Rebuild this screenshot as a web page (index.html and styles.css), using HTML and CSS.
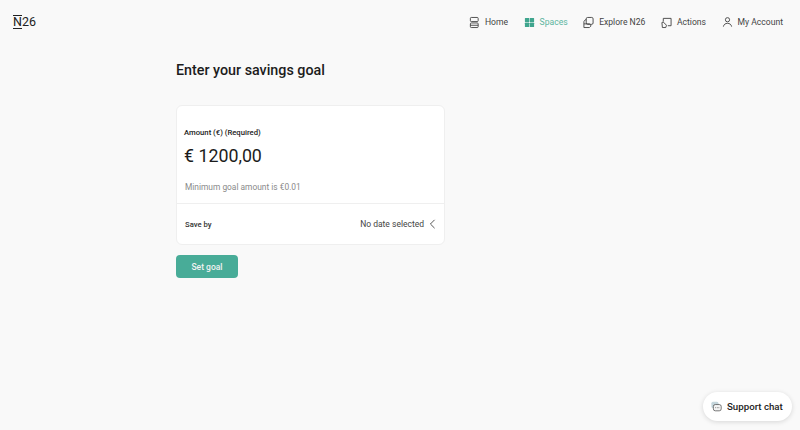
FILE: index.html
```html
<!DOCTYPE html>
<html lang="en">
<head>
<meta charset="utf-8">
<title>Enter your savings goal</title>
<link rel="stylesheet" href="styles.css">
</head>
<body>
<header class="topbar">
  <a class="logo"><span class="logo-n">N</span>26</a>
  <nav class="nav">
    <a class="nav-item">
      <svg class="icon" viewBox="0 0 12 14" fill="none" stroke="#444" stroke-width="1"><rect x="1.500" y="1.500" width="8.500" height="4.500" rx="1"/><rect x="1.500" y="7.500" width="8.500" height="5" rx="1"/><path d="M1.500 10h8.500"/></svg>
      Home
    </a>
    <a class="nav-item nav-active">
      <svg class="icon" viewBox="0 0 12 14" fill="#3fa58e"><rect x="1" y="2" width="4.700" height="4.700" rx=".4"/><rect x="6.300" y="2" width="4.700" height="4.700" rx=".4"/><rect x="1" y="7.300" width="4.700" height="4.700" rx=".4"/><rect x="6.300" y="7.300" width="4.700" height="4.700" rx=".4"/></svg>
      Spaces
    </a>
    <a class="nav-item">
      <svg class="icon" viewBox="0 0 12 14" fill="none" stroke="#444" stroke-width="1"><rect x="3.500" y="1.500" width="7.500" height="7.500" rx="1.500"/><path d="M3.500 4H2.500L1 6v6.500h6L8.500 11V9"/><path d="M1 8.500h6.500"/></svg>
      Explore N26
    </a>
    <a class="nav-item">
      <svg class="icon" viewBox="0 0 12 14" fill="none" stroke="#444" stroke-width="1"><path d="M2.500 6V2.500h8.500v8H7.500"/><path d="M1 7l1.500-.5L6 10l-.8 2.500H1.500z"/></svg>
      Actions
    </a>
    <a class="nav-item">
      <svg class="icon" viewBox="0 0 12 14" fill="none" stroke="#444" stroke-width="1"><circle cx="6" cy="4" r="2.300"/><path d="M1.500 11.500c.4-2.400 2.200-3.600 4.500-3.600s4.100 1.200 4.500 3.600"/></svg>
      My Account
    </a>
  </nav>
</header>

<main class="content">
  <h1 class="title">Enter your savings goal</h1>
  <section class="card">
    <div class="card-top">
      <div class="field-label">Amount (€) (Required)</div>
      <div class="amount">€ 1200,00</div>
      <div class="hint">Minimum goal amount is €0.01</div>
    </div>
    <div class="card-row">
      <span class="row-label">Save by</span>
      <span class="row-value">No date selected
        <svg class="chevron" viewBox="0 0 8 12" fill="none" stroke="#333" stroke-width="1"><path d="M6.500 1L1.500 6l5 5"/></svg>
      </span>
    </div>
  </section>
  <button class="primary" type="button">Set goal</button>
</main>

<button class="support" type="button">
  <svg class="support-icon" viewBox="0 0 14 14"><rect x="0.500" y="1" width="9" height="8" rx="2" fill="#c5d6dc"/><rect x="3" y="4.500" width="10" height="8" rx="2.500" fill="#f4f4f4" stroke="#555" stroke-width="1"/><path d="M5.500 8.500h5" stroke="#555" stroke-width="1" stroke-dasharray="1 1"/></svg>
  Support chat
</button>
</body>
</html>
```

FILE: styles.css
```css
* { box-sizing: border-box; }

html, body { height: 100%; }

body {
  margin: 0;
  background: #f9f9f9;
  color: #1f1f1f;
  font-family: Roboto, "Liberation Sans", sans-serif;
  position: relative;
  overflow: hidden;
}

.topbar {
  height: 44px;
  display: flex;
  align-items: center;
  justify-content: space-between;
  padding: 0 17px 0 13px;
}

.logo {
  font-size: 12.500px;
  font-weight: 400;
  color: #222;
  line-height: 1;
  display: flex;
  align-items: center;
}

.logo-n {
  display: block;
  width: 9px;
  border-top: 1.500px solid #222;
  border-bottom: 1.500px solid #222;
  padding: 1px 0;
  line-height: 10px;
  font-size: 12.500px;
  margin-right: 0;
}

.nav {
  display: flex;
  align-items: center;
  gap: 15.500px;
}

.nav-item {
  display: flex;
  align-items: center;
  gap: 5px;
  font-size: 8.600px;
  color: #444;
}

.nav-active { color: #5cb5a0; }

.icon { width: 11px; height: 13px; }

.content {
  margin-left: 176px;
  width: 269px;
  padding-top: 17px;
}

.title {
  margin: 0 0 26px;
  font-size: 14.300px;
  line-height: 18px;
  font-weight: 500;
  color: #1c1c1c;
}

.card {
  background: #fff;
  border: 1px solid #efefef;
  border-radius: 6px;
}

.card-top {
  padding: 22px 7px 10px;
  border-bottom: 1px solid #efefef;
}

.field-label {
  font-size: 7.700px;
  line-height: 10px;
  font-weight: 500;
  color: #222;
}

.amount {
  margin-top: 5px;
  font-size: 17.800px;
  line-height: 26px;
  color: #1c1c1c;
}

.hint {
  margin: 12px 0 0 1px;
  font-size: 8.400px;
  line-height: 12px;
  color: #8a8a8a;
}

.card-row {
  height: 40px;
  display: flex;
  align-items: center;
  justify-content: space-between;
  padding: 0 8px;
}

.row-label {
  font-size: 7.700px;
  font-weight: 500;
  color: #333;
}

.row-value {
  display: flex;
  align-items: center;
  gap: 5px;
  font-size: 8.500px;
  color: #444;
}

.chevron { width: 7px; height: 10px; }

.primary {
  display: block;
  margin-top: 10px;
  width: 62px;
  height: 23px;
  background: #48ac98;
  color: #f2f2f2;
  border: 0;
  border-radius: 4px;
  font-family: inherit;
  font-size: 8.500px;
  font-weight: 500;
}

.support {
  position: absolute;
  right: 8px;
  bottom: 9px;
  width: 89px;
  height: 29px;
  display: flex;
  align-items: center;
  gap: 5px;
  padding: 0 0 0 8px;
  background: #fff;
  border: 0;
  border-radius: 15px;
  box-shadow: 0 1px 5px rgba(0, 0, 0, .14);
  font-family: inherit;
  font-size: 9.700px;
  font-weight: 500;
  color: #222;
}

.support-icon { width: 11px; height: 11px; }
```
